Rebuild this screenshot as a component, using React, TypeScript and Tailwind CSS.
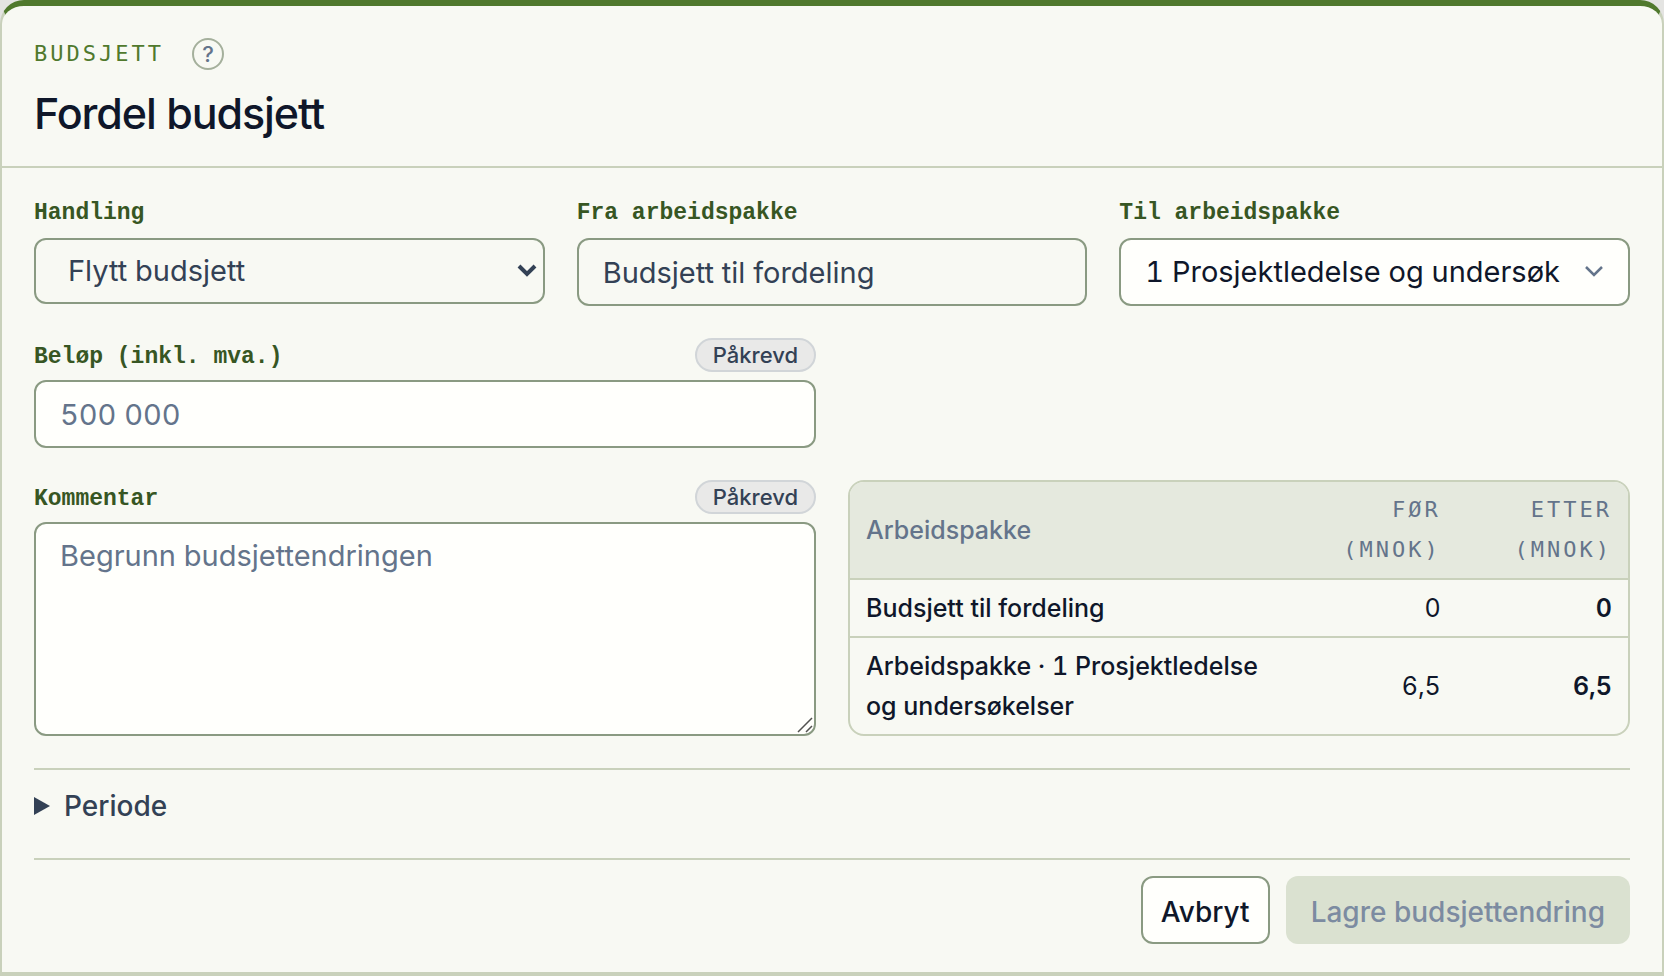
import { useState, type ReactNode } from 'react';

const packages = [
  '1 Prosjektledelse og undersøkelser',
  '2 Prosjektering',
  '3 Gjennomføring',
];

const rows = [
  { name: 'Budsjett til fordeling', before: '0', after: '0' },
  { name: 'Arbeidspakke · 1 Prosjektledelse og undersøkelser', before: '6,5', after: '6,5' },
];

const eyebrow =
  "font-['DejaVu_Sans_Mono',monospace] text-[22px] font-normal tracking-[3px] uppercase";

const control =
  'block w-full rounded-xl border-2 border-[#8a9a82] px-6 text-[29px] leading-[40px] tabular-nums outline-none focus:border-[#50792d]';

function Field({
  id,
  label,
  required = false,
  children,
}: {
  id: string;
  label: string;
  required?: boolean;
  children: ReactNode;
}) {
  return (
    <div className="flex min-w-0 flex-col gap-2">
      <div className="flex min-h-[30px] items-baseline justify-between">
        <label
          htmlFor={id}
          className="font-['Liberation_Mono',monospace] text-[23px] leading-[26px] font-bold text-[#375623]"
        >
          {label}
        </label>
        {required && (
          <span className="rounded-full border-2 border-[#d1d5d8] bg-[#e9e9e8] px-4 text-[22px] leading-[30px] font-medium text-[#334155]">
            Påkrevd
          </span>
        )}
      </div>
      {children}
    </div>
  );
}

function Chevron({ className, strokeWidth }: { className: string; strokeWidth: number }) {
  return (
    <svg
      viewBox="0 0 20 14"
      fill="none"
      stroke="currentColor"
      strokeWidth={strokeWidth}
      className={`pointer-events-none absolute top-1/2 h-[14px] w-5 -translate-y-1/2 ${className}`}
      aria-hidden="true"
    >
      <path d="M2 2l8 8 8-8" />
    </svg>
  );
}

export default function App() {
  const [action, setAction] = useState('move');
  const [target, setTarget] = useState(packages[0]);
  const [amount, setAmount] = useState('');
  const [comment, setComment] = useState('');

  const canSave = amount.trim() !== '' && comment.trim() !== '';

  return (
    <main className="min-h-screen bg-[#e4e4e2] font-['Inter',sans-serif] text-[#0f172a]">
      <form
        onSubmit={(e) => e.preventDefault()}
        className="rounded-t-3xl border-x-2 border-t-[6px] border-b-4 border-x-[#c9d1bb] border-t-[#50792d] border-b-[#c9d1bb] bg-[#f8f9f3]"
      >
        <header className="border-b-2 border-[#c9d1bb] px-8 pt-8 pb-[26px]">
          <div className="flex items-center gap-7">
            <p className={`${eyebrow} leading-8 text-[#50792d]`}>Budsjett</p>
            <button
              type="button"
              aria-label="Hjelp"
              className="flex size-8 items-center justify-center rounded-full border-2 border-[#a5b09c] text-[22px] leading-none font-medium text-[#64748b]"
            >
              ?
            </button>
          </div>
          <h1 className="mt-4 text-[43px] leading-[54px] font-medium tracking-tight">
            Fordel budsjett
          </h1>
        </header>

        <div className="px-8 pt-8 pb-7">
          <div className="grid grid-cols-3 gap-8">
            <Field id="action" label="Handling">
              <div className="relative text-[#334155]">
                <select
                  id="action"
                  value={action}
                  onChange={(e) => setAction(e.target.value)}
                  className={`${control} h-[66px] appearance-none bg-transparent pl-8`}
                >
                  <option value="move">Flytt budsjett</option>
                  <option value="increase">Øk budsjett</option>
                </select>
                <Chevron className="right-2" strokeWidth={4} />
              </div>
            </Field>
            <Field id="source" label="Fra arbeidspakke">
              <input
                id="source"
                readOnly
                value="Budsjett til fordeling"
                className={`${control} h-[68px] bg-transparent text-[#334155]`}
              />
            </Field>
            <Field id="target" label="Til arbeidspakke">
              <div className="relative text-[#64748b]">
                <select
                  id="target"
                  value={target}
                  onChange={(e) => setTarget(e.target.value)}
                  className={`${control} h-[68px] appearance-none bg-[#fffffc] pr-[68px] text-[#0f172a]`}
                >
                  {packages.map((name) => (
                    <option key={name}>{name}</option>
                  ))}
                </select>
                <Chevron className="right-[26px]" strokeWidth={2.5} />
              </div>
            </Field>
          </div>

          <div className="mt-8 grid grid-cols-2 gap-8">
            <Field id="amount" label="Beløp (inkl. mva.)" required>
              <input
                id="amount"
                value={amount}
                onChange={(e) => setAmount(e.target.value)}
                placeholder="500 000"
                className={`${control} h-[68px] bg-[#fffffc] placeholder:text-[#64748b]`}
              />
            </Field>
            <div />

            <Field id="comment" label="Kommentar" required>
              <div className="relative">
                <textarea
                  id="comment"
                  value={comment}
                  onChange={(e) => setComment(e.target.value)}
                  placeholder="Begrunn budsjettendringen"
                  className={`${control} h-[214px] resize-none bg-[#fffffc] py-3 placeholder:text-[#64748b]`}
                />
                <svg
                  viewBox="0 0 16 16"
                  stroke="#52524f"
                  strokeWidth="1.5"
                  className="pointer-events-none absolute right-[3px] bottom-[3px] size-4"
                  aria-hidden="true"
                >
                  <path d="M1 15L15 1M9 15l6-6" />
                </svg>
              </div>
            </Field>

            <div className="overflow-hidden rounded-2xl border-2 border-[#c9d1bb]">
              <table className="w-full table-fixed text-[25px] leading-[40px] tabular-nums">
                <thead className="bg-[#e5e9de] text-[#64748b]">
                  <tr>
                    <th className="w-[56%] px-4 py-2 text-left font-medium">Arbeidspakke</th>
                    <th className={`${eyebrow} w-[22%] px-4 py-2 text-right`}>Før (MNOK)</th>
                    <th className={`${eyebrow} w-[22%] px-4 py-2 text-right`}>Etter (MNOK)</th>
                  </tr>
                </thead>
                <tbody>
                  {rows.map((row) => (
                    <tr key={row.name} className="border-t-2 border-[#c9d1bb]">
                      <th className="px-4 py-2 text-left font-medium">{row.name}</th>
                      <td className="px-4 py-2 text-right">{row.before}</td>
                      <td className="px-4 py-2 text-right font-semibold">{row.after}</td>
                    </tr>
                  ))}
                </tbody>
              </table>
            </div>
          </div>

          <details className="mt-8 border-t-2 border-[#c9d1bb] pt-4 pb-8">
            <summary className="flex cursor-pointer list-none items-center gap-[14px] text-[28px] leading-[40px] font-medium text-[#334155]">
              <svg viewBox="0 0 16 18" fill="currentColor" className="h-[18px] w-4" aria-hidden="true">
                <path d="M0 0l16 9-16 9z" />
              </svg>
              Periode
            </summary>
          </details>

          <div className="flex justify-end gap-4 border-t-2 border-[#c9d1bb] pt-4">
            <button
              type="button"
              className="h-[68px] rounded-xl border-2 border-[#8a9a82] bg-[#fffffc] px-[18px] pt-1 text-[28px] font-medium"
            >
              Avbryt
            </button>
            <button
              type="submit"
              disabled={!canSave}
              className="h-[68px] rounded-xl bg-[#50792d] px-[25px] pt-1 text-[28px] font-medium text-white disabled:bg-[#dae1d0] disabled:text-[#7c8ba1]"
            >
              Lagre budsjettendring
            </button>
          </div>
        </div>
      </form>
    </main>
  );
}
